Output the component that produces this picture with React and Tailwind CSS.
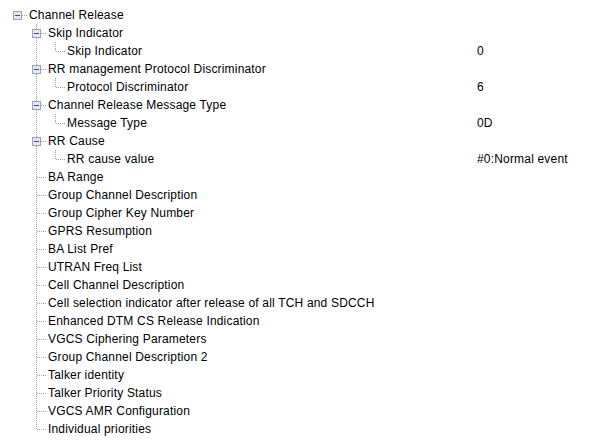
const tree = [
  {
    label: 'Channel Release',
    children: [
      { label: 'Skip Indicator', children: [{ label: 'Skip Indicator', value: '0' }] },
      { label: 'RR management Protocol Discriminator', children: [{ label: 'Protocol Discriminator', value: '6' }] },
      { label: 'Channel Release Message Type', children: [{ label: 'Message Type', value: '0D' }] },
      { label: 'RR Cause', children: [{ label: 'RR cause value', value: '#0:Normal event' }] },
      { label: 'BA Range' },
      { label: 'Group Channel Description' },
      { label: 'Group Cipher Key Number' },
      { label: 'GPRS Resumption' },
      { label: 'BA List Pref' },
      { label: 'UTRAN Freq List' },
      { label: 'Cell Channel Description' },
      { label: 'Cell selection indicator after release of all TCH and SDCCH' },
      { label: 'Enhanced DTM CS Release Indication' },
      { label: 'VGCS Ciphering Parameters' },
      { label: 'Group Channel Description 2' },
      { label: 'Talker identity' },
      { label: 'Talker Priority Status' },
      { label: 'VGCS AMR Configuration' },
      { label: 'Individual priorities' },
    ],
  },
]

// flatten into rows, remembering which ancestors still have siblings below
function flatten(nodes, depth = 0, guides = [], out = []) {
  nodes.forEach((node, i) => {
    const last = i === nodes.length - 1
    out.push({ ...node, depth, last, guides, hasKids: !!node.children })
    if (node.children) flatten(node.children, depth + 1, [...guides, !last], out)
  })
  return out
}

const LINE = '#a0a0a0'

function Guide({ on }) {
  return (
    <svg width="19" height="18" className="shrink-0">
      {on && <line x1="9.5" y1="0" x2="9.5" y2="18" stroke={LINE} strokeDasharray="1 1" />}
    </svg>
  )
}

function Connector({ row }) {
  const isRoot = row.depth === 0
  return (
    <svg width="19" height="18" className="shrink-0">
      {!isRoot && (
        <line x1="9.5" y1="0" x2="9.5" y2={row.last ? 10 : 18} stroke={LINE} strokeDasharray="1 1" />
      )}
      <line x1="10" y1="9.5" x2="19" y2="9.5" stroke={LINE} strokeDasharray="1 1" />
      {row.hasKids && (
        <g>
          <rect x="5.5" y="5.5" width="8" height="8" fill="#e4e6f2" stroke="#97a3b6" />
          <line x1="7" y1="9.5" x2="12" y2="9.5" stroke="#46468c" />
        </g>
      )}
    </svg>
  )
}

export default function App() {
  const rows = flatten(tree)
  return (
    <div className="w-[598px] h-[448px] bg-white pt-[6px] pl-[8px] text-[12px] tracking-[0.18px] text-black overflow-hidden" style={{ fontFamily: '"Liberation Sans", Arial, sans-serif' }}>
      {rows.map((row, i) => (
        <div key={i} className="flex items-center h-[18px]">
          <div className="flex items-center w-[469px] shrink-0">
            {row.guides.map((g, k) => (
              <Guide key={k} on={k > 0 && g} />
            ))}
            <Connector row={row} />
            <span className="ml-[2px] whitespace-nowrap leading-[18px]">{row.label}</span>
          </div>
          {row.value && <span className="whitespace-nowrap leading-[18px]">{row.value}</span>}
        </div>
      ))}
    </div>
  )
}
